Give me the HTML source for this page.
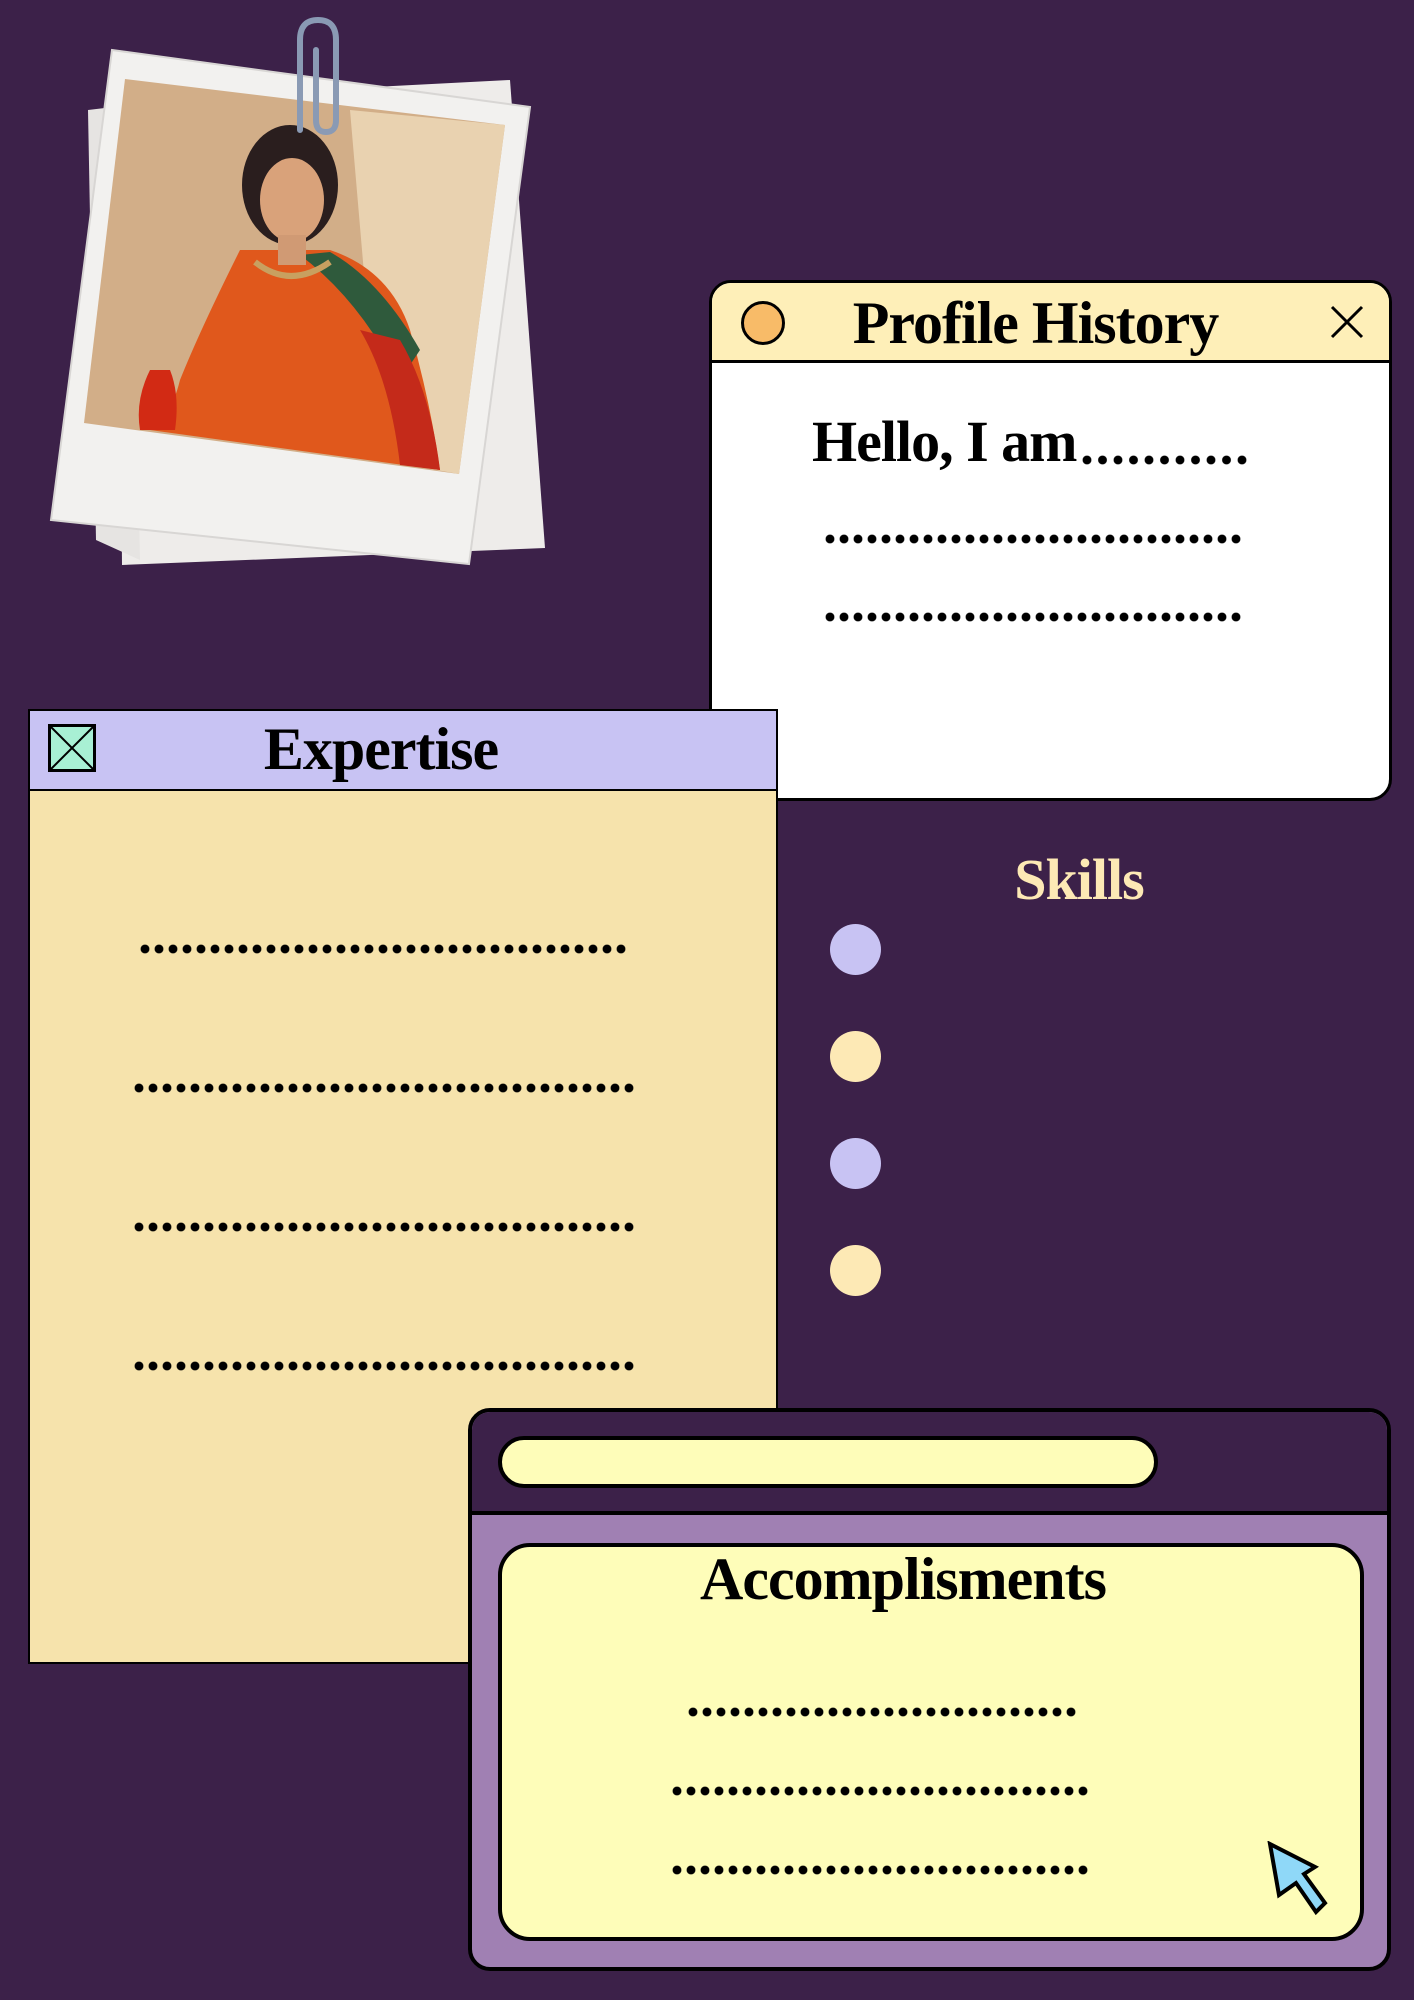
<!DOCTYPE html>
<html><head><meta charset="utf-8"><style>
*{margin:0;padding:0;box-sizing:border-box}
body{width:1414px;height:2000px;background:#3c2149;position:relative;overflow:hidden;font-family:"Liberation Serif",serif}
.abs{position:absolute}
.t{font-weight:bold;color:#000;white-space:nowrap;letter-spacing:-1px}
.dots{position:absolute;height:10px;background:radial-gradient(circle at 5px 5px,#000 4px,transparent 4.8px) 0 0/14px 10px repeat-x}
</style></head><body>

<svg class="abs" style="left:0;top:0" width="600" height="600" viewBox="0 0 600 600">
  <polygon points="118,100 510,80 545,548 122,565" fill="#eeecea"/>
  <polygon points="88,110 130,105 140,560 96,540" fill="#e6e4e2"/>
  <polygon points="112,50 530,107 469,564 51,520" fill="#f2f1ef" stroke="#d8d6d4" stroke-width="2"/>
  <polygon points="125,79 505,125 459,474 84,423" fill="#d2ae88"/>
  <polygon points="350,110 505,125 459,474 380,460" fill="#e9d2b0"/>
  <path d="M240,250 Q200,330 180,380 Q170,420 150,430 L440,470 Q430,400 410,330 Q390,270 330,250 Z" fill="#e0581c"/>
  <path d="M300,255 Q360,300 400,380 L420,350 Q380,280 330,252 Z" fill="#2f5a3c"/>
  <path d="M150,370 Q135,400 140,430 L175,430 Q180,395 170,370 Z" fill="#d22a14"/>
  <path d="M360,330 Q390,380 400,465 L440,470 Q430,390 400,340 Z" fill="#c42a1a"/>
  <ellipse cx="290" cy="185" rx="48" ry="60" fill="#2a1e1e"/>
  <ellipse cx="292" cy="200" rx="32" ry="42" fill="#d9a27a"/>
  <rect x="278" y="235" width="28" height="30" fill="#d09a74"/>
  <path d="M255,262 Q290,290 330,262" stroke="#c8a060" stroke-width="6" fill="none"/>
  <path d="M300,130 L300,40 Q300,20 318,20 Q336,20 336,40 L336,120 Q336,132 326,132 Q316,132 316,120 L316,50" fill="none" stroke="#8a9ab4" stroke-width="6" stroke-linecap="round"/>
</svg>

<div class="abs" style="left:709px;top:280px;width:683px;height:521px;background:#fff;border:3px solid #000;border-radius:22px;overflow:hidden">
  <div style="height:80px;background:#feefb8;border-bottom:3px solid #000;position:relative">
    <div class="abs" style="left:29px;top:18px;width:44px;height:44px;border-radius:50%;background:#f8bb68;border:3px solid #000"></div>
    <div class="abs t" style="left:0;width:100%;text-align:center;top:6px;font-size:60px;padding-right:30px">Profile History</div>
    <svg class="abs" style="left:617px;top:21px" width="36" height="36"><path d="M3,3 L33,33 M33,3 L3,33" stroke="#000" stroke-width="3"/></svg>
  </div>
  <div class="abs t" style="left:100px;top:125px;font-size:58px">Hello, I am</div>
  <div class="dots" style="left:370px;top:172px;width:166px;background-size:15.5px 10px"></div>
  <div class="dots" style="left:113px;top:251px;width:420px"></div>
  <div class="dots" style="left:113px;top:329px;width:420px"></div>
</div>

<div class="abs" style="left:28px;top:709px;width:750px;height:955px;background:#f6e3ac;border:2px solid #000">
  <div style="height:80px;background:#c8c3f3;border-bottom:2px solid #000;position:relative">
    <svg class="abs" style="left:18px;top:13px" width="48" height="48"><rect x="1.5" y="1.5" width="45" height="45" fill="#a8f0d4" stroke="#000" stroke-width="3"/><path d="M2,2 L46,46 M46,2 L2,46" stroke="#000" stroke-width="2"/></svg>
    <div class="abs t" style="left:0;width:100%;text-align:center;top:4px;font-size:60px;padding-right:44px">Expertise</div>
  </div>
  <div class="dots" style="left:110px;top:233px;width:490px"></div>
  <div class="dots" style="left:104px;top:372px;width:504px"></div>
  <div class="dots" style="left:104px;top:511px;width:504px"></div>
  <div class="dots" style="left:104px;top:650px;width:504px"></div>
</div>

<div class="abs t" style="left:979px;width:200px;text-align:center;top:846px;font-size:58px;color:#fde9b5">Skills</div>
<div class="abs" style="left:830px;top:924px;width:51px;height:51px;border-radius:50%;background:#c8c3f3"></div>
<div class="abs" style="left:830px;top:1031px;width:51px;height:51px;border-radius:50%;background:#fde9b5"></div>
<div class="abs" style="left:830px;top:1138px;width:51px;height:51px;border-radius:50%;background:#c8c3f3"></div>
<div class="abs" style="left:830px;top:1245px;width:51px;height:51px;border-radius:50%;background:#fde9b5"></div>

<div class="abs" style="left:468px;top:1408px;width:923px;height:563px;background:#a080b3;border:4px solid #000;border-radius:22px;overflow:hidden">
  <div style="height:103px;background:#3c2149;border-bottom:4px solid #000;position:relative">
    <div class="abs" style="left:26px;top:24px;width:660px;height:52px;background:#fefdb9;border:4px solid #000;border-radius:26px"></div>
  </div>
  <div class="abs" style="left:26px;top:131px;width:866px;height:398px;background:#fefdb9;border:4px solid #000;border-radius:32px">
    <div class="abs t" style="left:0;width:100%;text-align:center;top:-2px;font-size:60px;padding-right:56px">Accomplisments</div>
    <div class="dots" style="left:186px;top:160px;width:392px"></div>
    <div class="dots" style="left:170px;top:239px;width:420px"></div>
    <div class="dots" style="left:170px;top:318px;width:420px"></div>
  </div>
  <svg class="abs" style="left:795px;top:429px" width="64" height="76" viewBox="0 0 64 76"><path d="M3,3 L48,26 L37,33 L58,62 L49,71 L29,42 L12,54 Z" fill="#8fd8f8" stroke="#000" stroke-width="4" stroke-linejoin="miter"/></svg>
</div>

</body></html>
